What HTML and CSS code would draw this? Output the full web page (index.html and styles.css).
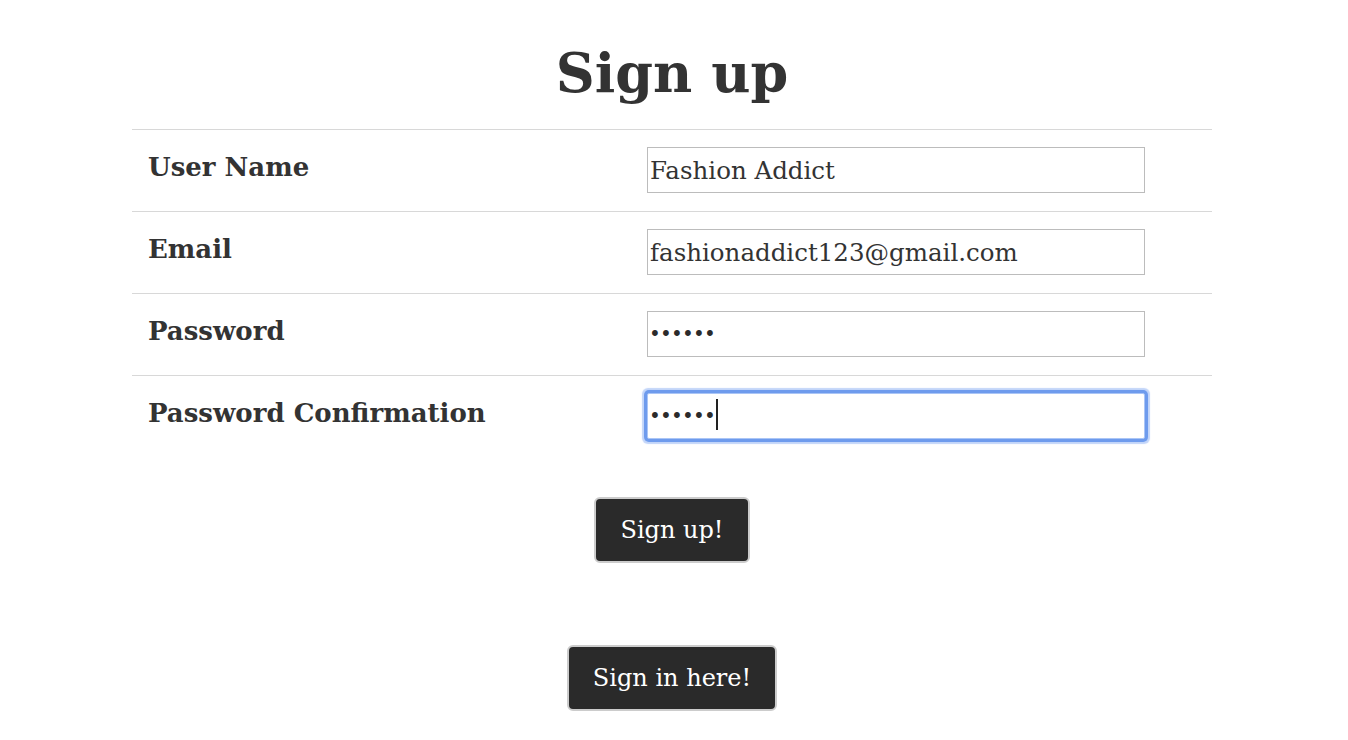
FILE: index.html
```html
<!DOCTYPE html>
<html lang="en">
<head>
<meta charset="utf-8">
<title>Sign up</title>
<link rel="stylesheet" href="styles.css">
</head>
<body>
<main class="page">
  <h1 class="title">Sign up</h1>
  <form class="form">
    <div class="row">
      <label class="label" for="name">User Name</label>
      <div class="field"><input class="input" id="name" type="text" value="Fashion Addict"></div>
    </div>
    <div class="row">
      <label class="label" for="email">Email</label>
      <div class="field"><input class="input" id="email" type="text" value="fashionaddict123@gmail.com"></div>
    </div>
    <div class="row">
      <label class="label" for="pw">Password</label>
      <div class="field"><input class="input input-pw" id="pw" type="password" value="secret"></div>
    </div>
    <div class="row row-last">
      <label class="label" for="pw2">Password Confirmation</label>
      <div class="field"><div class="focus-wrap"><input class="input input-pw input-focus" id="pw2" type="password" value="secret"><span class="caret"></span></div></div>
    </div>
    <div class="actions">
      <button class="btn" type="button">Sign up!</button>
    </div>
  </form>
  <div class="actions actions-second">
    <button class="btn" type="button">Sign in here!</button>
  </div>
</main>
</body>
</html>
```

FILE: styles.css
```css
html, body {
  margin: 0;
  padding: 0;
  background: #ffffff;
}
body {
  padding-right: 4px;
  font-family: "DejaVu Serif", "Liberation Serif", serif;
  color: #333333;
}
.page {
  width: 1080px;
  margin: 0 auto;
}
.title {
  margin: 0;
  padding-top: 46px;
  height: 129px;
  box-sizing: border-box;
  text-align: center;
  font-size: 54px;
  font-weight: bold;
  line-height: 54px;
}
.form {
  margin: 0;
}
.row {
  display: grid;
  grid-template-columns: 515px 1fr;
  border-top: 1px solid #d8d8d8;
  height: 82px;
  box-sizing: border-box;
}
.label {
  padding: 22px 0 0 16px;
  font-size: 26px;
  font-weight: bold;
  line-height: 30px;
}
.field {
  padding-top: 17px;
}
.input {
  display: block;
  width: 498px;
  height: 46px;
  box-sizing: border-box;
  margin: 0;
  padding: 0 2px;
  border: 1px solid #bcbcbc;
  border-radius: 0;
  font-family: "DejaVu Serif", "Liberation Serif", serif;
  font-size: 24.5px;
  color: #333333;
  background: #ffffff;
  outline: none;
}
.input-pw {
  padding-left: 1px;
  font-size: 20px;
  letter-spacing: -0.8px;
  color: #2b2b2b;
}
.focus-wrap {
  position: relative;
  width: 498px;
}
.input-focus {
  border-color: #aac5f6;
  border-radius: 2px;
  box-shadow: 0 0 0 3px #6e9bed, 0 0 1px 5px #c2d5f9;
}
.caret {
  position: absolute;
  left: 69px;
  top: 6px;
  width: 2px;
  height: 31px;
  background: #222222;
}
.actions {
  display: flex;
  justify-content: center;
  padding-top: 40px;
}
.actions-second {
  padding-top: 82px;
}
.btn {
  height: 66px;
  padding: 0 24px;
  border: 2px solid #cccccc;
  border-radius: 6px;
  background: #2a2a2a;
  color: #ffffff;
  font-family: "DejaVu Serif", "Liberation Serif", serif;
  font-size: 24px;
  cursor: pointer;
}
```
